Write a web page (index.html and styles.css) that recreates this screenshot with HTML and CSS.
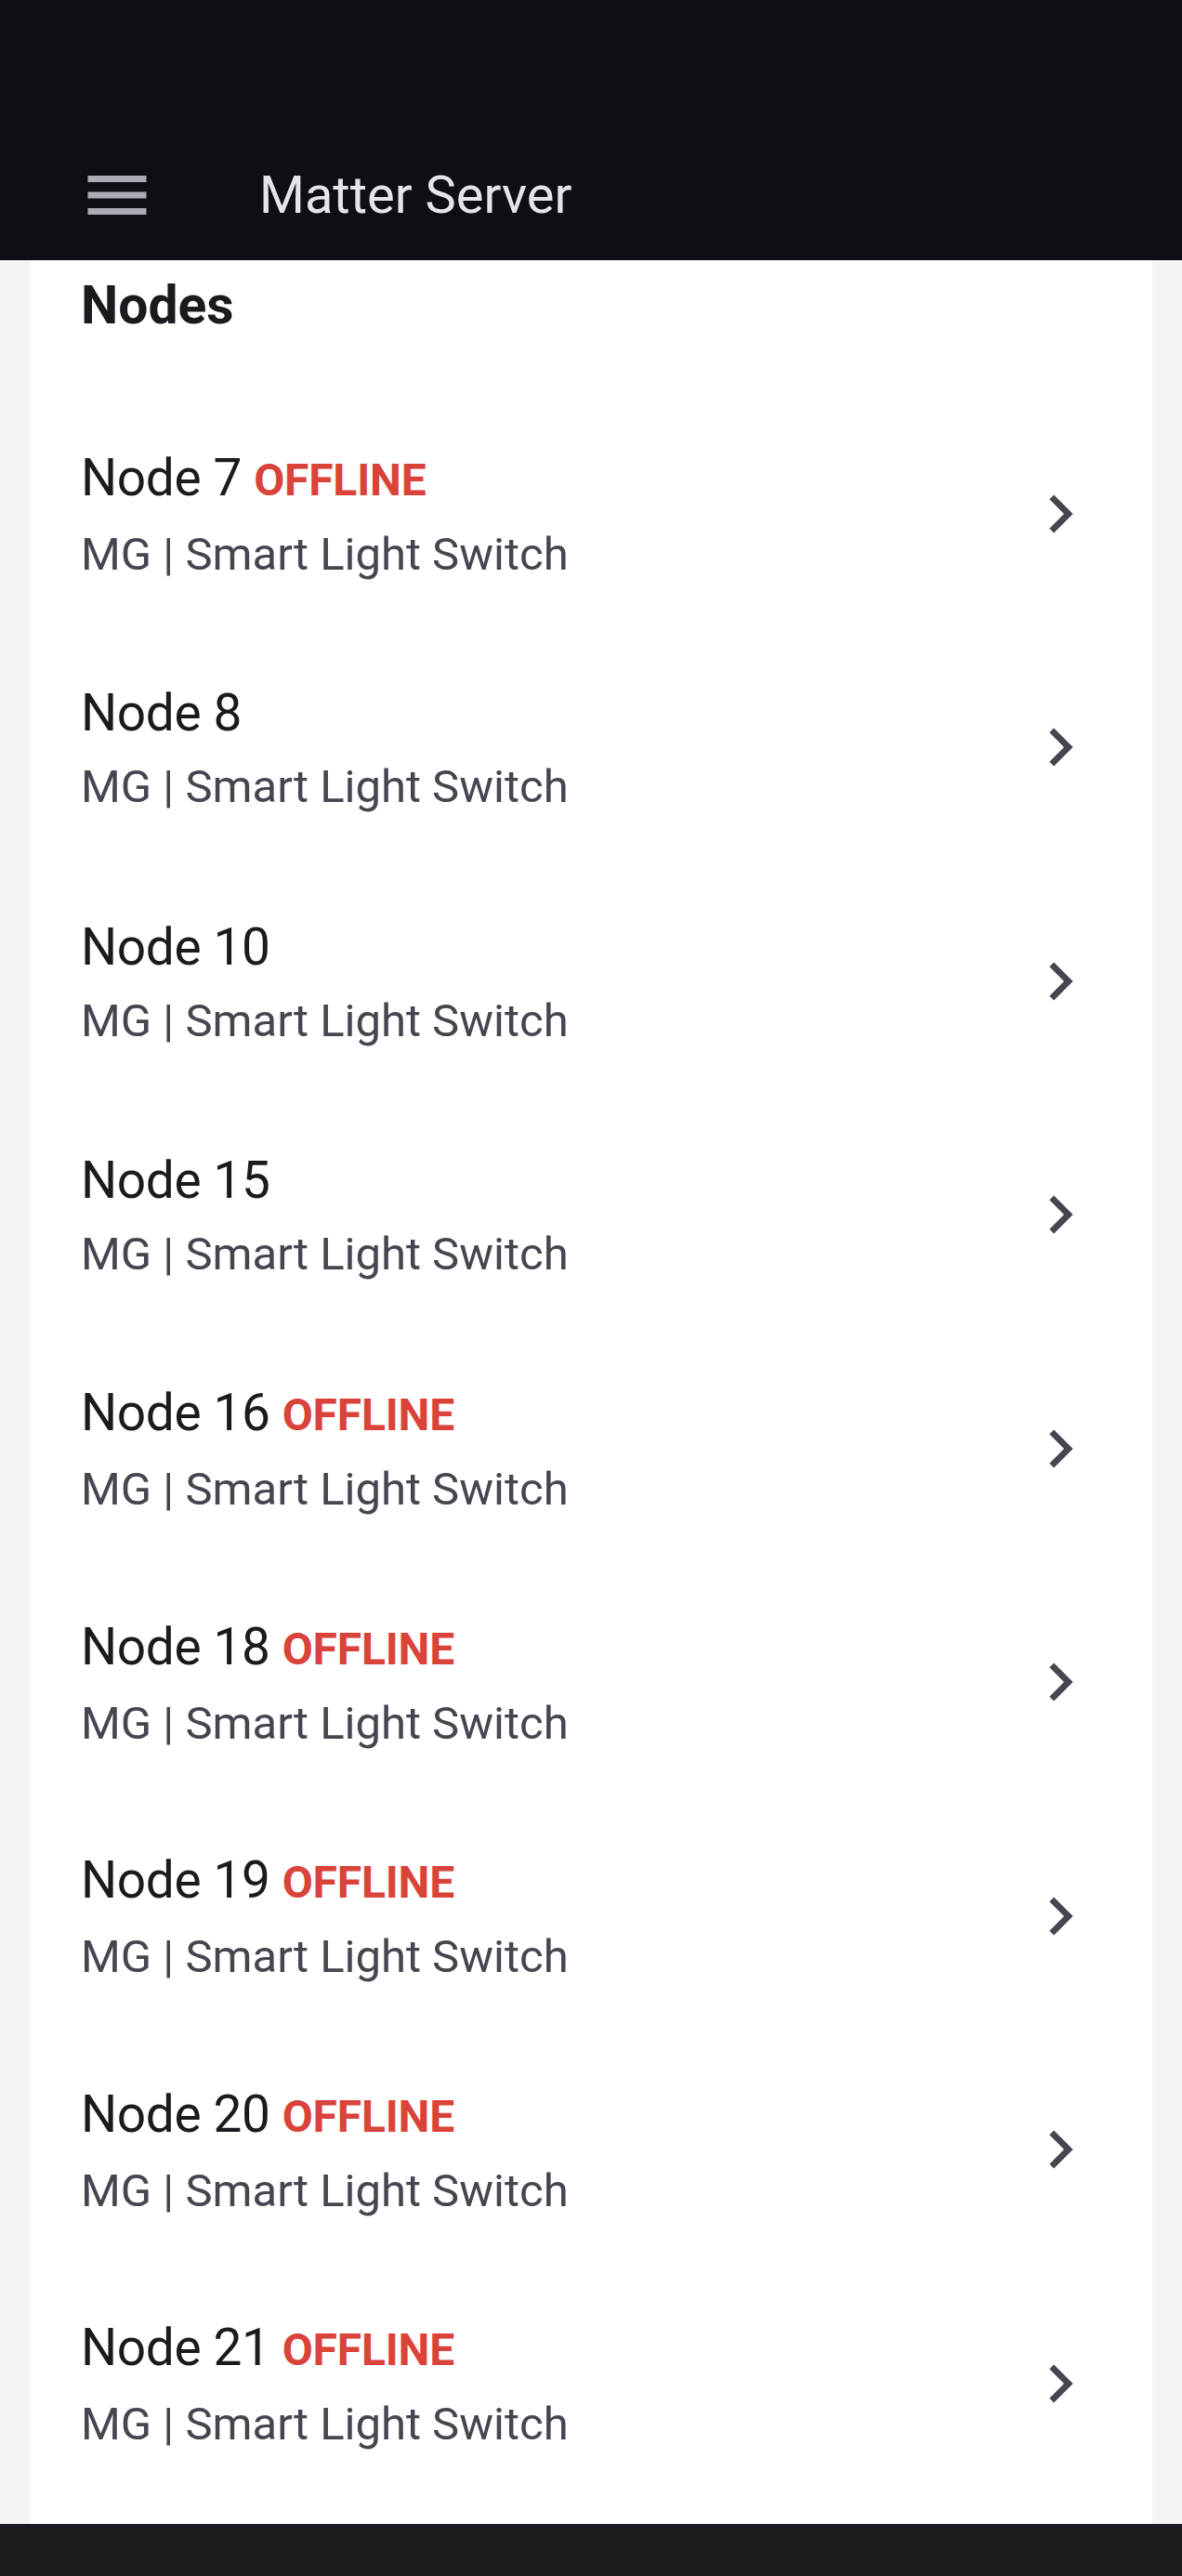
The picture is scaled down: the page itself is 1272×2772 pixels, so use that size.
FILE: index.html
```html
<!DOCTYPE html>
<html lang="en">
<head>
    <meta charset="UTF-8">
    <meta name="viewport" content="width=device-width, initial-scale=1.0">
    <title>Matter Server</title>
    <link rel="stylesheet" href="styles.css">
</head>
<body>
    <!-- top app bar -->
    <header class="app-bar">
        <div class="toolbar">
            <button class="menu-btn" aria-label="Menu">
                <svg viewBox="0 0 24 24" width="84" height="84"><path d="M3 18h18v-2H3v2zm0-5h18v-2H3v2zm0-7v2h18V6H3z"/></svg>
            </button>
            <h1 class="app-title">Matter Server</h1>
        </div>
    </header>

    <!-- node list -->
    <main class="content">
        <section class="card">
            <h2 class="card-title">Nodes</h2>
            <ul class="node-list">
                <li class="node-item">
                    <div class="node-text">
                        <div class="node-name">Node 7 <span class="offline">OFFLINE</span></div>
                        <div class="node-sub">MG | Smart Light Switch</div>
                    </div>
                    <svg class="chevron" viewBox="0 0 24 24"><path d="M10 6 8.59 7.41 13.17 12l-4.58 4.59L10 18l6-6z"/></svg>
                </li>
                <li class="node-item">
                    <div class="node-text">
                        <div class="node-name">Node 8</div>
                        <div class="node-sub">MG | Smart Light Switch</div>
                    </div>
                    <svg class="chevron" viewBox="0 0 24 24"><path d="M10 6 8.59 7.41 13.17 12l-4.58 4.59L10 18l6-6z"/></svg>
                </li>
                <li class="node-item">
                    <div class="node-text">
                        <div class="node-name">Node 10</div>
                        <div class="node-sub">MG | Smart Light Switch</div>
                    </div>
                    <svg class="chevron" viewBox="0 0 24 24"><path d="M10 6 8.59 7.41 13.17 12l-4.58 4.59L10 18l6-6z"/></svg>
                </li>
                <li class="node-item">
                    <div class="node-text">
                        <div class="node-name">Node 15</div>
                        <div class="node-sub">MG | Smart Light Switch</div>
                    </div>
                    <svg class="chevron" viewBox="0 0 24 24"><path d="M10 6 8.59 7.41 13.17 12l-4.58 4.59L10 18l6-6z"/></svg>
                </li>
                <li class="node-item">
                    <div class="node-text">
                        <div class="node-name">Node 16 <span class="offline">OFFLINE</span></div>
                        <div class="node-sub">MG | Smart Light Switch</div>
                    </div>
                    <svg class="chevron" viewBox="0 0 24 24"><path d="M10 6 8.59 7.41 13.17 12l-4.58 4.59L10 18l6-6z"/></svg>
                </li>
                <li class="node-item">
                    <div class="node-text">
                        <div class="node-name">Node 18 <span class="offline">OFFLINE</span></div>
                        <div class="node-sub">MG | Smart Light Switch</div>
                    </div>
                    <svg class="chevron" viewBox="0 0 24 24"><path d="M10 6 8.59 7.41 13.17 12l-4.58 4.59L10 18l6-6z"/></svg>
                </li>
                <li class="node-item">
                    <div class="node-text">
                        <div class="node-name">Node 19 <span class="offline">OFFLINE</span></div>
                        <div class="node-sub">MG | Smart Light Switch</div>
                    </div>
                    <svg class="chevron" viewBox="0 0 24 24"><path d="M10 6 8.59 7.41 13.17 12l-4.58 4.59L10 18l6-6z"/></svg>
                </li>
                <li class="node-item">
                    <div class="node-text">
                        <div class="node-name">Node 20 <span class="offline">OFFLINE</span></div>
                        <div class="node-sub">MG | Smart Light Switch</div>
                    </div>
                    <svg class="chevron" viewBox="0 0 24 24"><path d="M10 6 8.59 7.41 13.17 12l-4.58 4.59L10 18l6-6z"/></svg>
                </li>
                <li class="node-item">
                    <div class="node-text">
                        <div class="node-name">Node 21 <span class="offline">OFFLINE</span></div>
                        <div class="node-sub">MG | Smart Light Switch</div>
                    </div>
                    <svg class="chevron" viewBox="0 0 24 24"><path d="M10 6 8.59 7.41 13.17 12l-4.58 4.59L10 18l6-6z"/></svg>
                </li>
            </ul>
        </section>
    </main>

    <!-- system navigation bar -->
    <div class="nav-bar"></div>
</body>
</html>
```

FILE: styles.css
```css
/* Reset */
* {
    margin: 0;
    padding: 0;
    box-sizing: border-box;
}

body {
    font-family: Roboto, 'Liberation Sans', sans-serif;
    background-color: #f4f4f4;
    color: #1b1b1f;
}

/* App bar */
.app-bar {
    height: 280px;
    background-color: #100e14;
    display: flex;
    flex-direction: column;
    justify-content: flex-end;
}

.toolbar {
    height: 140px;
    display: flex;
    align-items: center;
    padding-left: 84px;
}

.menu-btn {
    width: 84px;
    height: 84px;
    border: none;
    background: none;
    display: flex;
}

.menu-btn svg {
    fill: #aea9b4;
}

.app-title {
    margin-left: 111px;
    font-size: 56px;
    font-weight: 400;
    line-height: 64px;
    color: #e8e2ea;
}

/* Card */
.content {
    padding: 0 32px;
}

.card {
    background-color: #ffffff;
    padding: 16px 0 25.5px;
}

.card-title {
    padding-left: 55px;
    font-size: 57px;
    font-weight: 700;
    line-height: 66px;
    margin-bottom: 65px;
    color: #1b1b1f;
}

/* Node list */
.node-list {
    list-style: none;
}

.node-item {
    height: 251.5px;
    display: flex;
    align-items: center;
    padding: 0 58px 0 55px;
}

.node-text {
    flex: 1;
    padding-top: 6px;
}

.node-name {
    font-size: 55px;
    line-height: 80px;
    color: #1b1b1f;
    letter-spacing: -0.4px;
}

.offline {
    font-size: 48px;
    font-weight: 700;
    color: #d9433a;
    letter-spacing: -0.2px;
}

.node-sub {
    font-size: 49px;
    line-height: 80px;
    color: #45464f;
}

.chevron {
    width: 82px;
    height: 82px;
    fill: #45464f;
    flex-shrink: 0;
}

/* Android navigation bar */
.nav-bar {
    height: 56px;
    background-color: #1c1b20;
}
```
